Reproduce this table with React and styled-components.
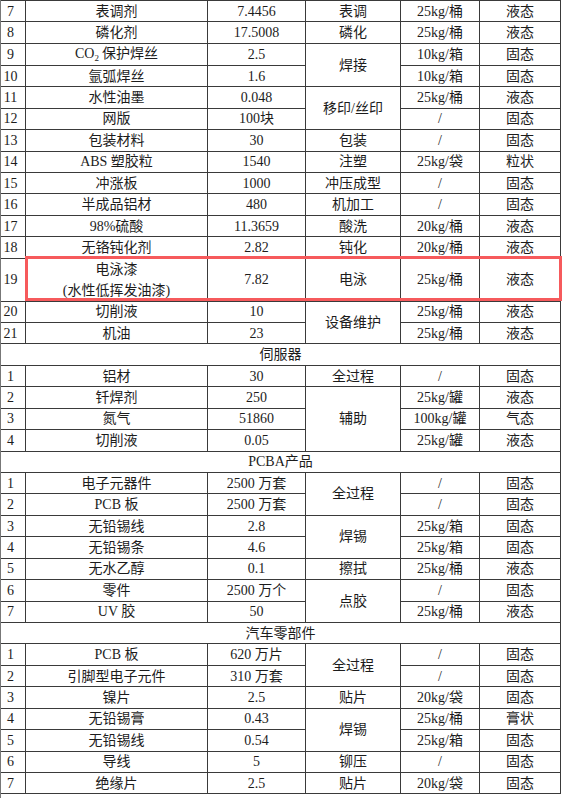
import React from 'react';
import styled, { createGlobalStyle } from 'styled-components';

const GlobalStyle = createGlobalStyle`
  html, body {
    margin: 0;
    padding: 0;
    background: #fff;
  }
  body {
    font-family: "Liberation Serif", "Noto Sans CJK SC", serif;
    color: #1c1c1c;
  }
`;

const ROW_H = 21.43;

// each row: [no, name, amount, process (null = covered by rowspan), processSpan, pack, state]
const sections = [
  {
    title: null,
    rows: [
      ['7', '表调剂', '7.4456', '表调', 1, '25kg/桶', '液态'],
      ['8', '磷化剂', '17.5008', '磷化', 1, '25kg/桶', '液态'],
      ['9', 'CO2', '2.5', '焊接', 2, '10kg/箱', '固态'],
      ['10', '氩弧焊丝', '1.6', null, 0, '10kg/箱', '固态'],
      ['11', '水性油墨', '0.048', '移印/丝印', 2, '25kg/桶', '液态'],
      ['12', '网版', '100块', null, 0, '/', '固态'],
      ['13', '包装材料', '30', '包装', 1, '/', '固态'],
      ['14', 'ABS 塑胶粒', '1540', '注塑', 1, '25kg/袋', '粒状'],
      ['15', '冲涨板', '1000', '冲压成型', 1, '/', '固态'],
      ['16', '半成品铝材', '480', '机加工', 1, '/', '固态'],
      ['17', '98%硫酸', '11.3659', '酸洗', 1, '20kg/桶', '液态'],
      ['18', '无铬钝化剂', '2.82', '钝化', 1, '20kg/桶', '液态'],
      ['19', 'PAINT', '7.82', '电泳', 1, '25kg/桶', '液态', true],
      ['20', '切削液', '10', '设备维护', 2, '25kg/桶', '液态'],
      ['21', '机油', '23', null, 0, '25kg/桶', '液态'],
    ],
  },
  {
    title: '伺服器',
    rows: [
      ['1', '铝材', '30', '全过程', 1, '/', '固态'],
      ['2', '钎焊剂', '250', '辅助', 3, '25kg/罐', '液态'],
      ['3', '氮气', '51860', null, 0, '100kg/罐', '气态'],
      ['4', '切削液', '0.05', null, 0, '25kg/罐', '液态'],
    ],
  },
  {
    title: 'PCBA产品',
    rows: [
      ['1', '电子元器件', '2500 万套', '全过程', 2, '/', '固态'],
      ['2', 'PCB 板', '2500 万套', null, 0, '/', '固态'],
      ['3', '无铅锡线', '2.8', '焊锡', 2, '25kg/箱', '固态'],
      ['4', '无铅锡条', '4.6', null, 0, '25kg/箱', '固态'],
      ['5', '无水乙醇', '0.1', '擦拭', 1, '25kg/桶', '液态'],
      ['6', '零件', '2500 万个', '点胶', 2, '/', '固态'],
      ['7', 'UV 胶', '50', null, 0, '25kg/桶', '液态'],
    ],
  },
  {
    title: '汽车零部件',
    rows: [
      ['1', 'PCB 板', '620 万片', '全过程', 2, '/', '固态'],
      ['2', '引脚型电子元件', '310 万套', null, 0, '/', '固态'],
      ['3', '镍片', '2.5', '贴片', 1, '20kg/袋', '固态'],
      ['4', '无铅锡膏', '0.43', '焊锡', 2, '25kg/桶', '膏状'],
      ['5', '无铅锡线', '0.54', null, 0, '25kg/箱', '固态'],
      ['6', '导线', '5', '铆压', 1, '/', '固态'],
      ['7', '绝缘片', '2.5', '贴片', 1, '20kg/袋', '固态'],
    ],
  },
];

const Page = styled.div`
  position: relative;
  width: 562px;
  height: 798px;
  overflow: hidden;
  border-left: 1px solid #777;
  box-sizing: border-box;
`;

const Table = styled.table`
  border-collapse: collapse;
  table-layout: fixed;
  width: 560px;
  margin-left: -1px;
  font-size: 14px;
`;

const Row = styled.tr`
  height: ${(p) => (p.$tall ? ROW_H * 2 : ROW_H)}px;
`;

const Cell = styled.td`
  border: 1px solid #3a3a3a;
  padding: 0 ${(p) => (p.$num ? '5px' : '0')} 0 0;
  text-align: center;
  vertical-align: middle;
  line-height: ${(p) => (p.$tall ? '21px' : '19px')};
  white-space: nowrap;
  overflow: visible;
`;

const TitleCell = styled.td`
  border: 1px solid #3a3a3a;
  text-align: center;
  vertical-align: middle;
  line-height: 19px;
  padding: 0;
`;

const Sub = styled.span`
  font-size: 9px;
  position: relative;
  top: 3px;
  margin-right: 3px;
`;

const Highlight = styled.div`
  position: absolute;
  left: 24px;
  top: ${ROW_H * 12 - 1}px;
  width: 537px;
  height: ${ROW_H * 2 + 2}px;
  border: 3px solid #f65a5c;
  box-sizing: border-box;
  pointer-events: none;
`;

const renderName = (name) => {
  if (name === 'CO2') {
    return (
      <>
        CO<Sub>2</Sub>保护焊丝
      </>
    );
  }
  if (name === 'PAINT') {
    return (
      <>
        电泳漆
        <br />
        (水性低挥发油漆)
      </>
    );
  }
  return name;
};

export default function App() {
  return (
    <Page>
      <GlobalStyle />
      <Table>
        <colgroup>
          <col style={{ width: 25 }} />
          <col style={{ width: 182 }} />
          <col style={{ width: 98 }} />
          <col style={{ width: 95 }} />
          <col style={{ width: 79 }} />
          <col style={{ width: 81 }} />
        </colgroup>
        <tbody>
          {sections.map((sec, si) => (
            <React.Fragment key={si}>
              {sec.title && (
                <Row>
                  <TitleCell colSpan={6}>{sec.title}</TitleCell>
                </Row>
              )}
              {sec.rows.map(([no, name, amount, proc, span, pack, state, tall], ri) => (
                <Row key={ri} $tall={tall}>
                  <Cell $num>{no}</Cell>
                  <Cell $tall={tall}>{renderName(name)}</Cell>
                  <Cell>{amount}</Cell>
                  {proc !== null && <Cell rowSpan={span}>{proc}</Cell>}
                  <Cell>{pack}</Cell>
                  <Cell>{state}</Cell>
                </Row>
              ))}
            </React.Fragment>
          ))}
        </tbody>
      </Table>
      <Highlight />
    </Page>
  );
}
